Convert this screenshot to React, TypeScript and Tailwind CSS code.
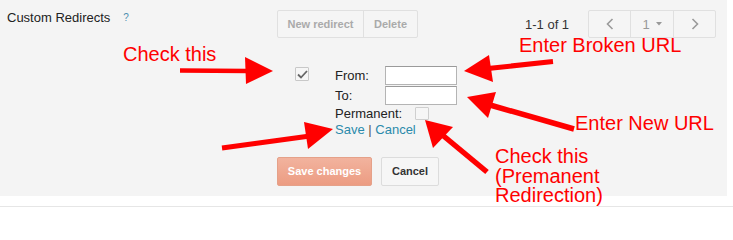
import React from "react";

export default function App() {
  return (
    <div className="relative w-[733px] h-[214px] bg-white font-['Liberation_Sans',Arial,sans-serif] overflow-hidden">
      <div className="w-[727px] h-[196px] bg-[#f4f4f4] pt-[10px]">
        {/* top row */}
        <div className="flex h-[28px]">
          <div className="w-[277px] pl-[7px] flex items-start">
            <span className="text-[13px] leading-[15px] text-[#222]">Custom Redirects</span>
            <span className="ml-[13px] mt-[2px] text-[10px] leading-[12px] text-[#4d8fb0]">?</span>
          </div>
          <div className="flex h-[28px] border border-[#e0e0e0] rounded-[2px] bg-[#f5f5f5]">
            <div className="w-[86px] flex items-center justify-center text-[11px] font-bold text-[#aaa] border-r border-[#e0e0e0]">
              New redirect
            </div>
            <div className="w-[53px] flex items-center justify-center text-[11px] font-bold text-[#aaa]">
              Delete
            </div>
          </div>
          <div className="ml-[107px] self-center text-[13px] leading-[15px] text-[#333]">1-1 of 1</div>
          <div className="ml-[19px] flex h-[28px] border border-[#e0e0e0] rounded-[2px] bg-[#f5f5f5]">
            <div className="w-[42px] flex items-center justify-center border-r border-[#e0e0e0]">
              <svg width="8" height="12" viewBox="0 0 8 12">
                <polyline points="6.5,1 1.5,6 6.5,11" fill="none" stroke="#9a9a9a" strokeWidth="1.6" />
              </svg>
            </div>
            <div className="w-[43px] flex items-center justify-center gap-[6px] border-r border-[#e0e0e0]">
              <span className="text-[13px] leading-[15px] text-[#999]">1</span>
              <svg width="6" height="4" viewBox="0 0 6 4">
                <polygon points="0,0 6,0 3,3.5" fill="#999" />
              </svg>
            </div>
            <div className="w-[41px] flex items-center justify-center">
              <svg width="8" height="12" viewBox="0 0 8 12">
                <polyline points="1.5,1 6.5,6 1.5,11" fill="none" stroke="#9a9a9a" strokeWidth="1.6" />
              </svg>
            </div>
          </div>
        </div>

        {/* form */}
        <div className="flex mt-[28px] pl-[295px]">
          <div className="mt-[1px] w-[14px] h-[14px] border border-[#c8c8c8] rounded-[1px] bg-[#f6f6f6] flex items-center justify-center">
            <svg width="11" height="9" viewBox="0 0 11 9">
              <polyline points="1,4.5 4,7.5 10,1" fill="none" stroke="#666" strokeWidth="1.8" />
            </svg>
          </div>
          <div className="ml-[26px] flex flex-col text-[13px] text-[#222]">
            <div className="flex h-[19px]">
              <span className="w-[50px] leading-[19px]">From:</span>
              <input className="w-[72px] h-[19px] bg-white border border-[#b4b4b4] border-t-[#9a9a9a] outline-none" />
            </div>
            <div className="flex h-[19px] mt-[1px]">
              <span className="w-[50px] leading-[19px]">To:</span>
              <input className="w-[72px] h-[19px] bg-white border border-[#b4b4b4] border-t-[#9a9a9a] outline-none" />
            </div>
            <div className="flex mt-[1px] leading-[15px]">
              <span>Permanent:</span>
              <span className="ml-[13px] mt-[1px] w-[14px] h-[13px] border border-[#cfcfcf] rounded-[1px] bg-[#f6f6f6]" />
            </div>
            <div className="mt-[1px] leading-[15px] text-[#2a8aab]">
              <span>Save</span> <span className="text-[#555]">|</span> <span>Cancel</span>
            </div>
          </div>
        </div>

        {/* buttons */}
        <div className="flex gap-[9px] pl-[277px] mt-[20px]">
          <div className="w-[95px] h-[29px] flex items-center justify-center rounded-[2px] border border-[#e5a189] bg-[linear-gradient(to_bottom,#f2b39e,#ec9c82)] text-[11px] font-bold text-white">
            Save changes
          </div>
          <div className="w-[58px] h-[29px] flex items-center justify-center rounded-[2px] border border-[#dcdcdc] bg-[#f6f6f6] text-[11px] font-bold text-[#333]">
            Cancel
          </div>
        </div>
      </div>
      <div className="mt-[10px] h-px bg-[#e6e6e6]" />

      {/* annotations overlay */}
      <svg className="absolute left-0 top-0 pointer-events-none" width="733" height="214" viewBox="0 0 733 214">
        <g fill="#ff0000" stroke="none">
          {/* check this -> checkbox */}
          <line x1="180" y1="70.5" x2="248" y2="71" stroke="#ff0000" strokeWidth="4.5" />
          <polygon points="245,57 273,71 246,84" />
          {/* broken url */}
          <line x1="553" y1="61.5" x2="488" y2="68.5" stroke="#ff0000" strokeWidth="5" />
          <polygon points="464,71 489,55 493,82" />
          {/* new url */}
          <line x1="574" y1="129" x2="490" y2="105" stroke="#ff0000" strokeWidth="5.5" />
          <polygon points="467,97 496,92 488,118" />
          {/* save */}
          <line x1="222" y1="148" x2="310" y2="136" stroke="#ff0000" strokeWidth="5" />
          <polygon points="333,129 304,122 308,149" />
          {/* permanent */}
          <line x1="487" y1="172" x2="440" y2="133" stroke="#ff0000" strokeWidth="5.5" />
          <polygon points="425,120 453,127 433,148" />
        </g>
      </svg>
      <div className="absolute left-[123px] top-[44px] text-[20px] leading-[20px] text-[#ff0000] whitespace-nowrap">Check this</div>
      <div className="absolute left-[519px] top-[35px] text-[20px] leading-[20px] text-[#ff0000] whitespace-nowrap">Enter Broken URL</div>
      <div className="absolute left-[575px] top-[113px] text-[20px] leading-[20px] text-[#ff0000] whitespace-nowrap">Enter New URL</div>
      <div className="absolute left-[495px] top-[147px] text-[20px] leading-[19.5px] text-[#ff0000] whitespace-nowrap">
        Check this
        <br />
        (Premanent
        <br />
        Redirection)
      </div>
    </div>
  );
}
